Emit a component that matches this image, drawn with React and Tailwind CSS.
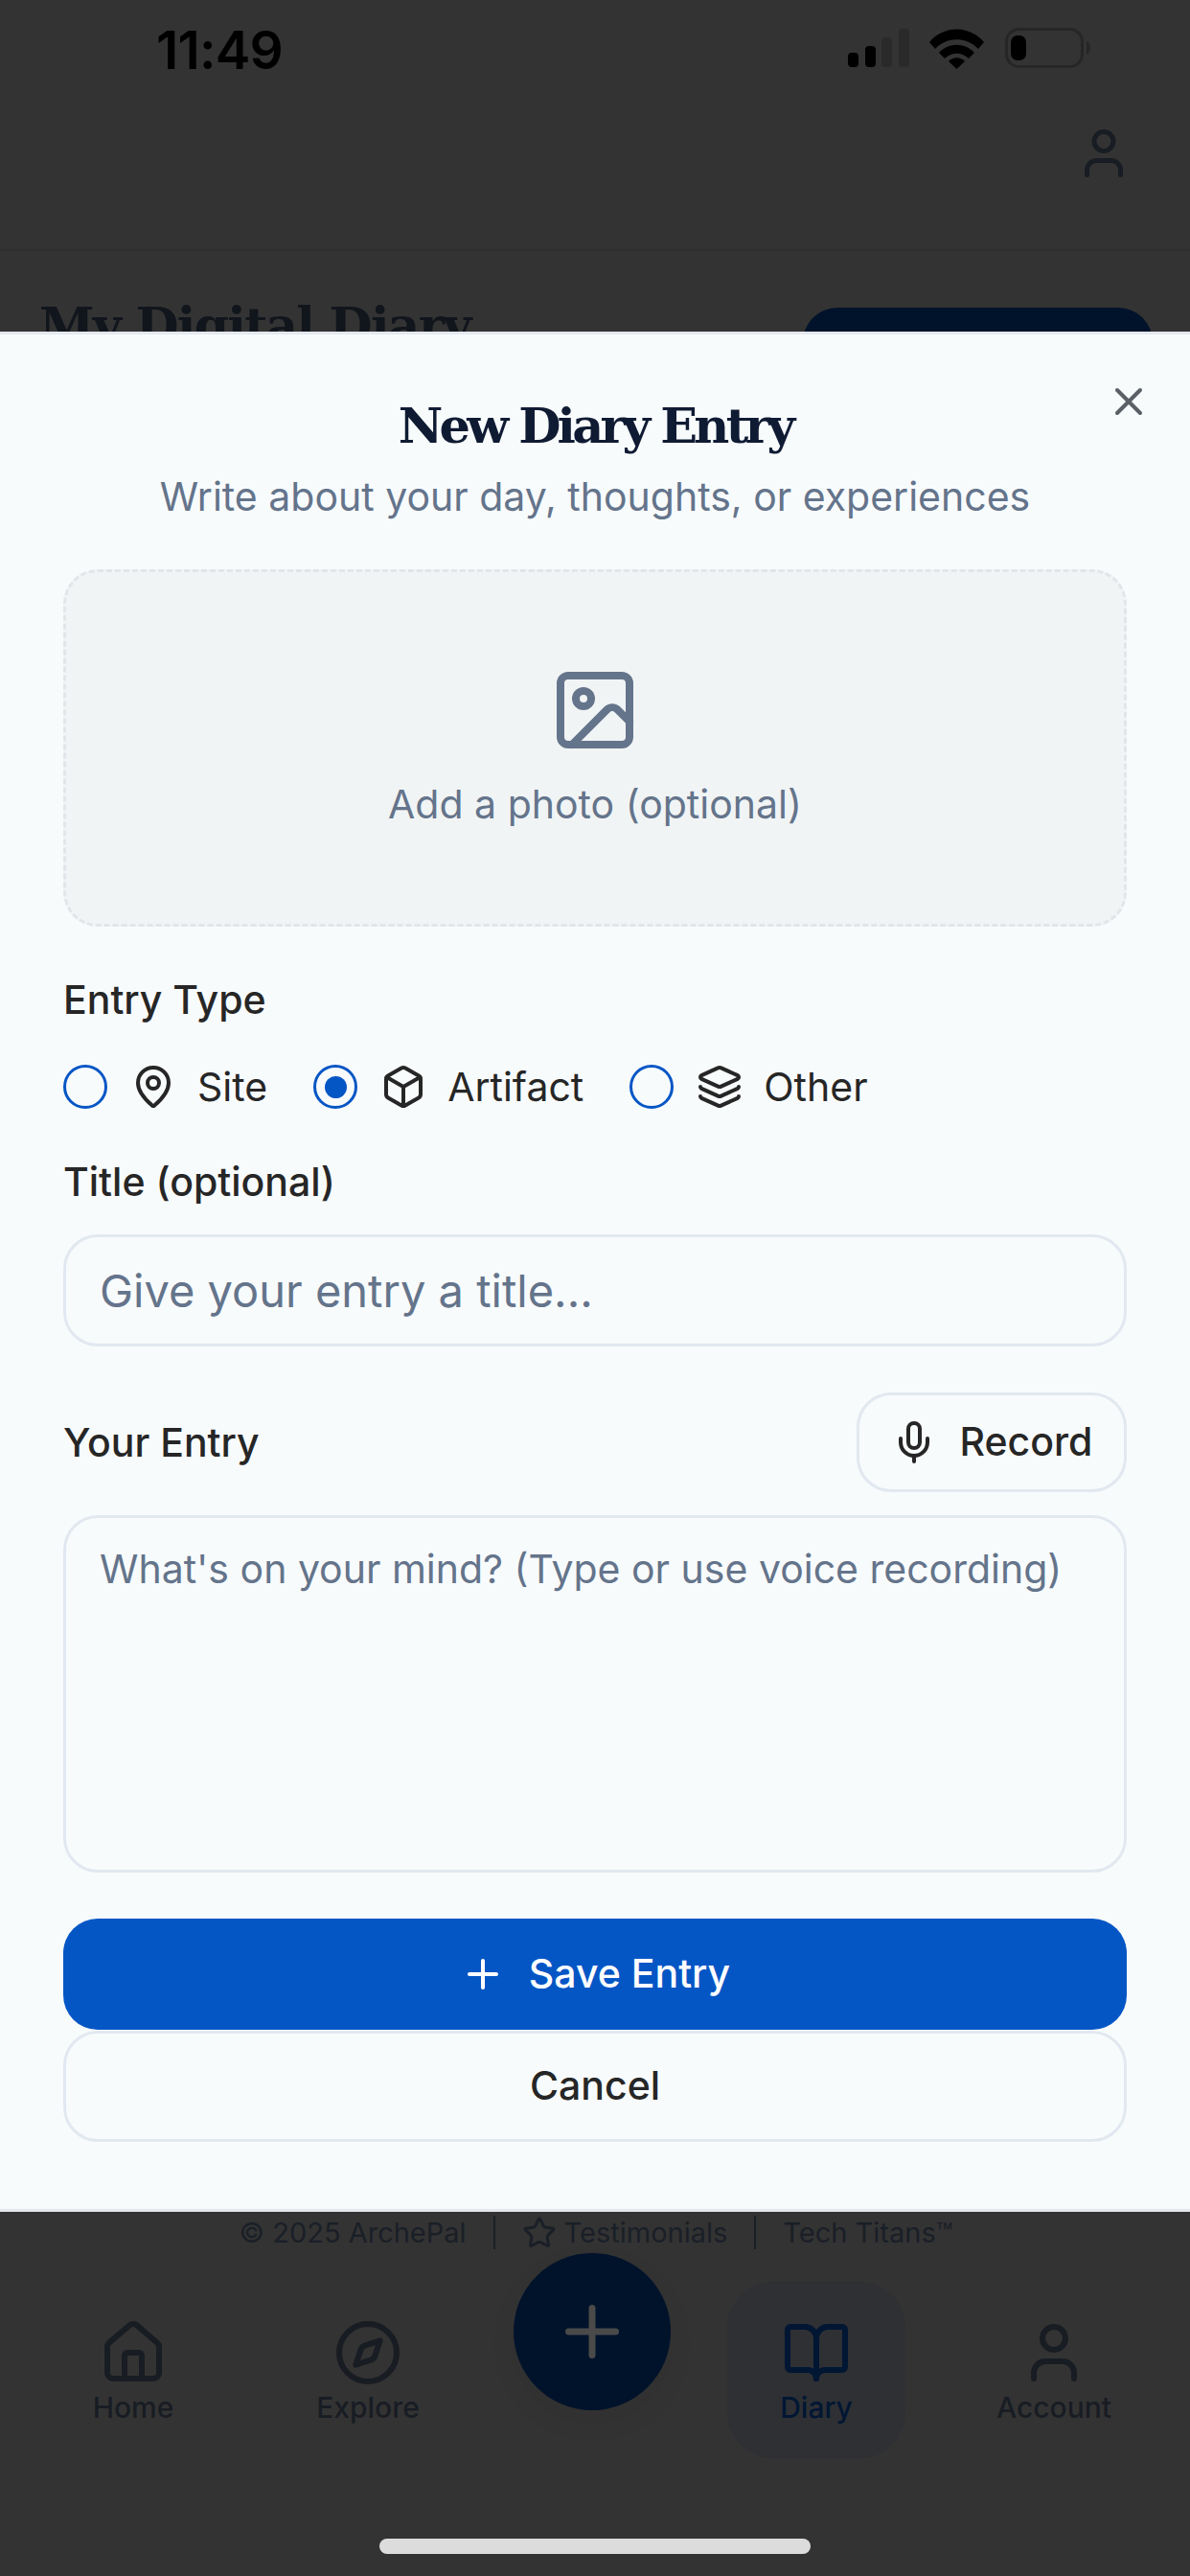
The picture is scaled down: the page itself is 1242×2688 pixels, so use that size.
import React from "react";
import { Image, MapPin, Box, Layers, Mic, Plus, X, House, Compass, BookOpen, User, Star } from "lucide-react";

function Radio({ checked, icon: Icon, label }) {
  return (
    <label className="flex items-center">
      <span className="flex h-[46px] w-[46px] items-center justify-center rounded-full border-[3px] border-[#0556c5]">
        {checked && <span className="h-[23px] w-[23px] rounded-full bg-[#0556c5]" />}
      </span>
      <Icon size={48} strokeWidth={2} className="ml-[24px] text-[#262626]" />
      <span className="ml-[22px] text-[41px] leading-[60px] text-[#262626]">{label}</span>
    </label>
  );
}

function NavItem({ icon: Icon, label, active, className }) {
  const color = active ? "text-[#001633]" : "text-[#181c23]";
  return (
    <div className={`flex flex-col items-center ${color} ${className}`}>
      <Icon size={72} strokeWidth={2} />
      <span className="text-[30px] leading-[42px] font-medium">{label}</span>
    </div>
  );
}

export default function App() {
  return (
    <div className="relative flex h-[2688px] w-[1242px] flex-col overflow-hidden bg-[#333333] font-['Inter',sans-serif]">
      {/* Status bar */}
      <div className="flex h-[124px] items-start justify-between pl-[163px] pr-[101px] pt-[19px]">
        <span className="text-[55px] leading-[66px] font-semibold tracking-[-0.8px] text-black">11:49</span>
        <svg width="256" height="44" viewBox="0 0 256 44" className="mt-[10px]">
          <rect x="0" y="26" width="11" height="15" rx="4" fill="#000" />
          <rect x="18" y="19" width="11" height="22" rx="4" fill="#000" />
          <rect x="35" y="10" width="11" height="31" rx="4" fill="#2a2a2a" />
          <rect x="53" y="1" width="11" height="40" rx="4" fill="#2a2a2a" />
          <path d="M85 15 C100 -3 127 -3 142 15 L136 22 C124 9 103 9 91 22 Z" fill="#000" />
          <path d="M95 26 C105 15 122 15 132 26 L126 32 C118 25 109 25 101 32 Z" fill="#000" />
          <path d="M105 35 C110 30 117 30 122 35 L113.5 43 Z" fill="#000" />
          <rect x="165.5" y="1.5" width="79" height="39" rx="13" fill="none" stroke="#262626" strokeWidth="3" />
          <rect x="170" y="8" width="16" height="26" rx="7" fill="#000" />
          <path d="M249 14 C254 15 254 27 249 28 Z" fill="#262626" />
        </svg>
      </div>

      {/* Page header */}
      <div className="flex h-[138px] items-start justify-end border-b-[2px] border-[#2e2e2e] pr-[60px]">
        <User size={60} strokeWidth={2} className="mt-[6px] text-[#181c23]" />
      </div>

      {/* Page title row */}
      <div className="flex items-start justify-between pl-[41px] pr-[39px] pt-[46px]">
        <span className="font-['DejaVu_Serif',serif] text-[52px] leading-[64px] font-bold tracking-[-1.8px] text-[#11151c]">My Digital Diary</span>
        <div className="mt-[13px] h-[100px] w-[365px] rounded-t-[36px] bg-[#00132b]" />
      </div>

      <div className="flex-1" />

      {/* Footer line */}
      <div className="absolute left-0 right-0 top-[2312px] flex h-[35px] items-center justify-center pl-[2px] text-[29px] text-[#1a1f27]">
        <span>© 2025 ArchePal</span>
        <span className="mx-[28px] h-[35px] w-[2px] bg-[#1a1f27]" />
        <Star size={36} strokeWidth={2} />
        <span className="ml-[8px]">Testimonials</span>
        <span className="mx-[28px] h-[35px] w-[2px] bg-[#1a1f27]" />
        <span>Tech Titans™</span>
      </div>

      {/* Bottom nav */}
      <div className="relative h-[269px] shrink-0">
        <div className="absolute left-[759px] top-[-38px] h-[184px] w-[186px] rounded-[48px] bg-[#2e3034]" />
        <div className="relative flex items-start">
          <NavItem icon={House} label="Home" className="ml-[67px] w-[144px]" />
          <NavItem icon={Compass} label="Explore" className="ml-[72px] w-[202px]" />
          <NavItem icon={BookOpen} label="Diary" active className="ml-[295px] w-[144px]" />
          <NavItem icon={User} label="Account" className="ml-[104px] w-[144px]" />
        </div>
        <div className="absolute left-[396px] top-[230px] h-[16px] w-[450px] rounded-full bg-[#dcdcdc]" />
      </div>

      {/* FAB */}
      <div className="absolute left-[536px] top-[2351px] flex h-[164px] w-[164px] items-center justify-center rounded-full bg-[#00132b] shadow-[0_12px_30px_rgba(0,0,0,0.06)]">
        <Plus size={84} strokeWidth={2} className="text-[#4a4a4a]" />
      </div>

      {/* Modal */}
      <div className="absolute left-0 right-0 top-[346px] h-[1962px] border-[3px] border-x-0 border-[#e4e8ee] bg-[#f8fbfc] px-[66px]">
        <button className="absolute right-[40px] top-[46px] text-[#5a6066]">
          <X size={48} strokeWidth={2} />
        </button>
        <h2 className="mt-[61px] text-center font-['DejaVu_Serif',serif] text-[51px] leading-[68px] font-bold tracking-[-3.8px] text-[#0f1b33]">New Diary Entry</h2>
        <p className="mt-[10px] text-center text-[41px] leading-[60px] text-[#64748b]">Write about your day, thoughts, or experiences</p>

        <div className="mt-[46px] flex h-[373px] flex-col items-center justify-center gap-[20px] rounded-[36px] border-[3px] border-dashed border-[#e2e5e9] bg-[#f1f4f5]">
          <Image size={96} strokeWidth={2} className="text-[#64748b]" />
          <span className="text-[41px] leading-[60px] text-[#64748b]">Add a photo (optional)</span>
        </div>

        <div className="mt-[46px] text-[41px] leading-[60px] font-[450] text-[#262626]">Entry Type</div>
        <div className="mt-[31px] flex items-center gap-[48px]">
          <Radio icon={MapPin} label="Site" />
          <Radio icon={Box} label="Artifact" checked />
          <Radio icon={Layers} label="Other" />
        </div>

        <div className="mt-[39px] text-[41px] leading-[60px] font-[450] text-[#262626]">Title (optional)</div>
        <input
          placeholder="Give your entry a title..."
          className="mt-[25px] block h-[117px] w-full rounded-[36px] border-[3px] border-[#e2e8f0] bg-transparent px-[35px] text-[47px] outline-none placeholder:text-[#64748b]"
        />

        <div className="mt-[48px] flex items-center justify-between">
          <span className="text-[41px] leading-[60px] font-[450] text-[#262626]">Your Entry</span>
          <button className="flex h-[104px] w-[282px] items-center justify-center gap-[24px] rounded-[36px] border-[3px] border-[#e2e8f0] text-[41px] font-[450] text-[#262626]">
            <Mic size={48} strokeWidth={2} />
            Record
          </button>
        </div>

        <textarea
          placeholder="What's on your mind? (Type or use voice recording)"
          className="mt-[24px] block h-[373px] w-full resize-none rounded-[36px] border-[3px] border-[#e2e8f0] bg-transparent px-[35px] py-[23px] text-[41px] leading-[60px] outline-none placeholder:text-[#64748b]"
        />

        <button className="mt-[48px] flex h-[116px] w-full items-center justify-center gap-[24px] rounded-[36px] bg-[#0556c5] text-[41px] font-[450] text-white">
          <Plus size={48} strokeWidth={2} />
          Save Entry
        </button>
        <button className="mt-[1px] flex h-[116px] w-full items-center justify-center rounded-[36px] border-[3px] border-[#e2e8f0] text-[41px] font-[450] text-[#262626]">
          Cancel
        </button>
      </div>
    </div>
  );
}
